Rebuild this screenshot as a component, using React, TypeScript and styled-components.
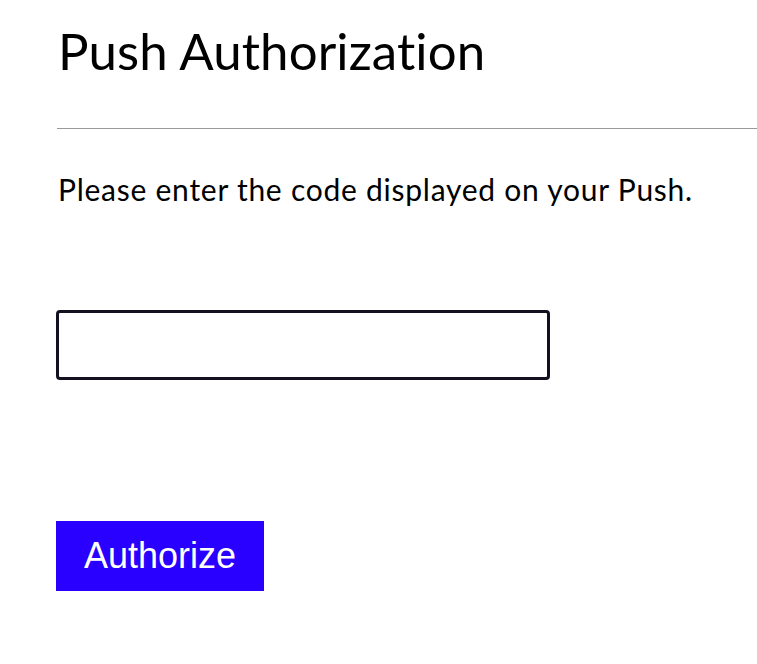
import React from 'react'
import styled, { createGlobalStyle } from 'styled-components'

const GlobalStyle = createGlobalStyle`
  body {
    margin: 0;
    background: #ffffff;
    font-family: "Lato", "Liberation Sans", sans-serif;
  }
`

const Page = styled.div`
  padding: 14px 0 0 56px;
`

const Title = styled.h1`
  margin: 0 0 0 2px;
  font-size: 51px;
  font-weight: 400;
  line-height: 74px;
  letter-spacing: 0.1px;
  color: #000;
`

const Divider = styled.hr`
  margin: 40px 0 0 1px;
  border: 0;
  border-top: 1px solid #9a9a9a;
`

const Message = styled.p`
  margin: 40px 0 0 2px;
  font-size: 30px;
  line-height: 40px;
  letter-spacing: 0.75px;
  color: #000;
`

const CodeInput = styled.input`
  display: block;
  box-sizing: border-box;
  margin-top: 101px;
  width: 494px;
  height: 70px;
  border: 3px solid #14101f;
  border-radius: 4px;
  padding: 0 12px;
  font-size: 24px;
  outline: none;
`

const SubmitButton = styled.button`
  display: block;
  margin-top: 141px;
  width: 208px;
  height: 70px;
  border: 0;
  background: #2900ff;
  color: #fff;
  font-family: "Liberation Sans", Arial, sans-serif;
  font-size: 36px;
  cursor: pointer;
`

const App = () => {
  return (
    <>
      <GlobalStyle />
      <Page>
        <Title>Push Authorization</Title>
        <Divider />
        <Message>Please enter the code displayed on your Push.</Message>
        <CodeInput type="text" aria-label="Code" />
        <SubmitButton type="button">Authorize</SubmitButton>
      </Page>
    </>
  )
}

export default App
